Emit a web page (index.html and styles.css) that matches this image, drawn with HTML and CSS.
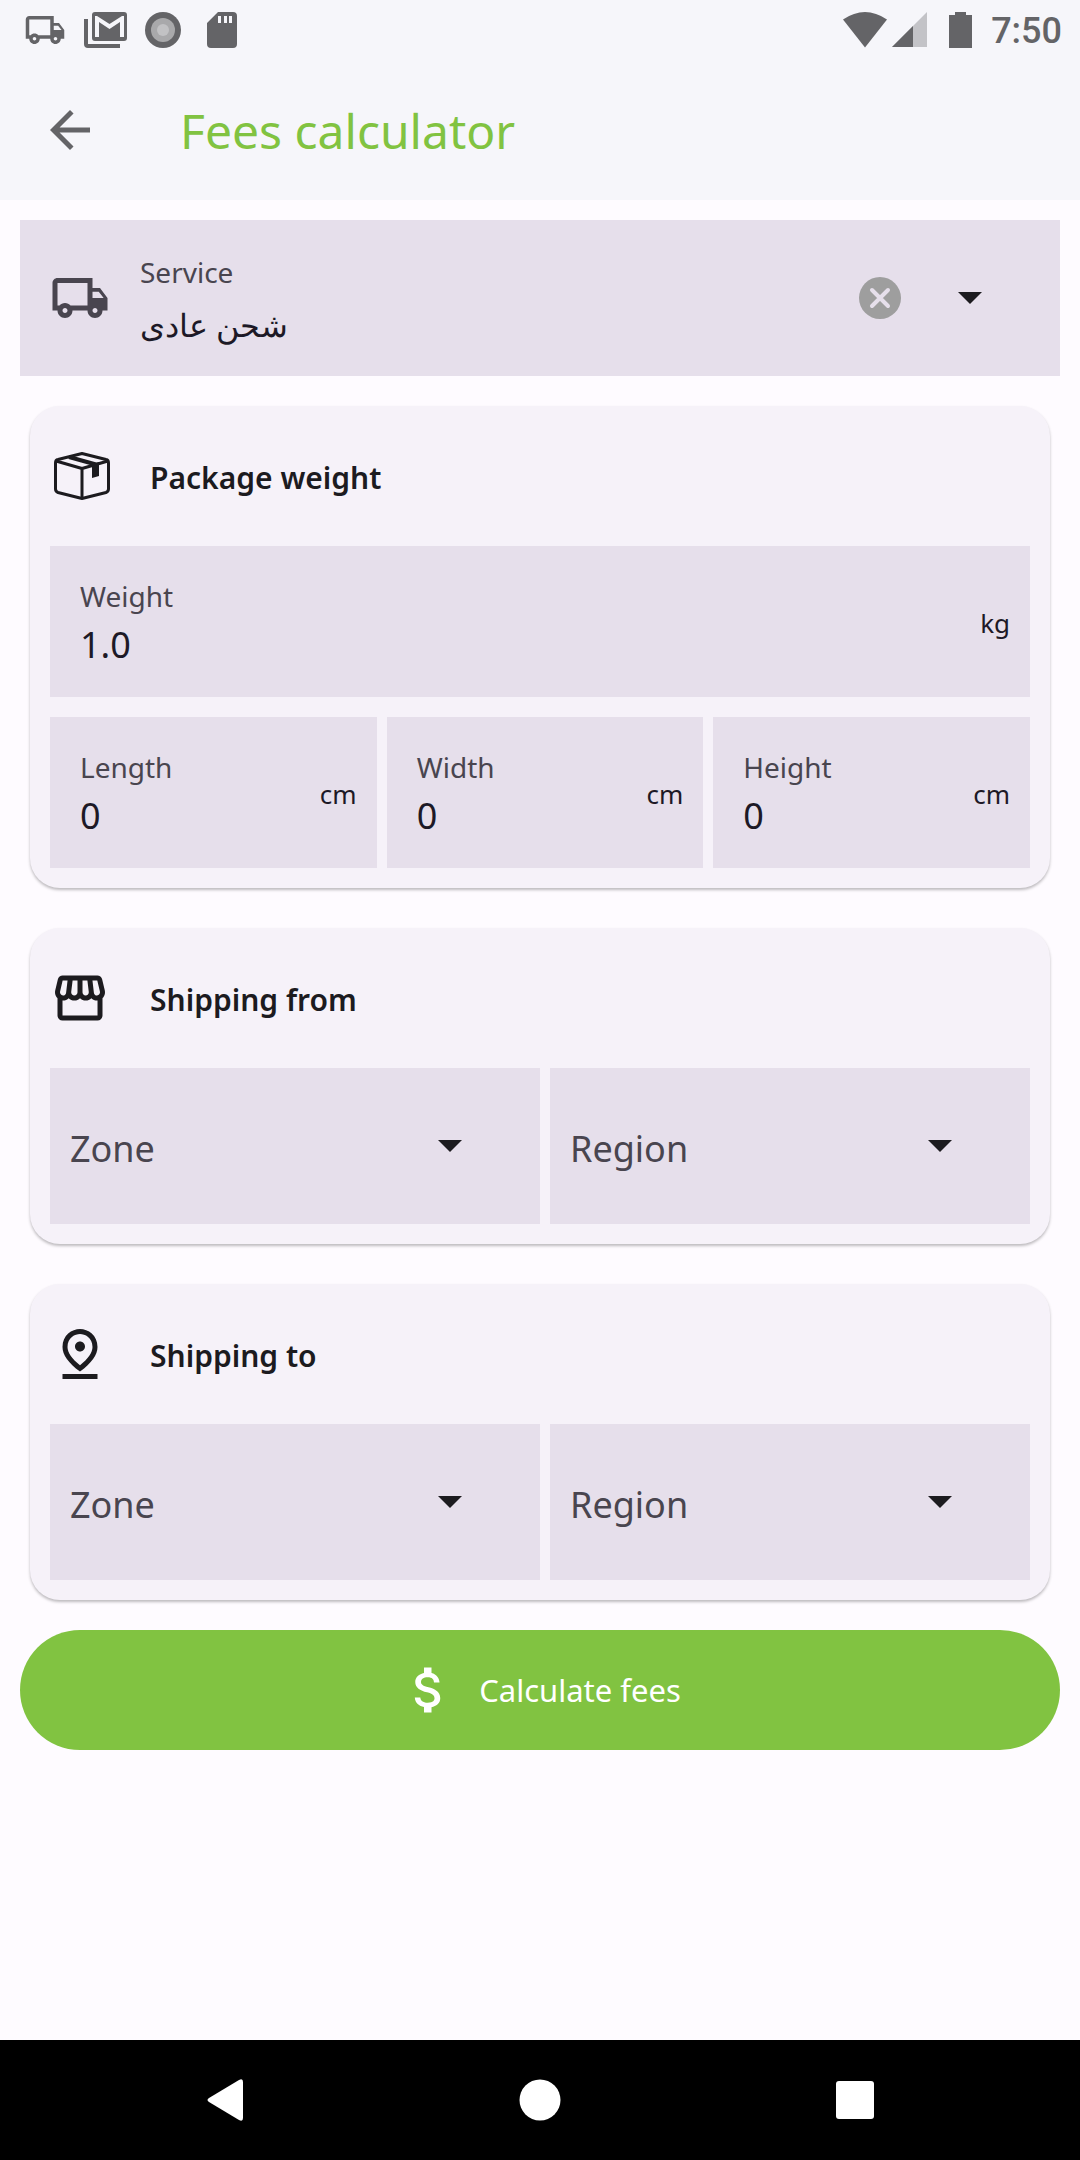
FILE: index.html
```html
<!DOCTYPE html>
<html lang="en">
<head>
<meta charset="utf-8">
<meta name="viewport" content="width=device-width, initial-scale=1">
<title>Fees calculator</title>
<link rel="stylesheet" href="styles.css">
</head>
<body>
<svg class="sprite" aria-hidden="true">
  <symbol id="truck" viewBox="0 0 24 24"><path d="M20 8h-3V4H3c-1.1 0-2 .9-2 2v11h2c0 1.66 1.34 3 3 3s3-1.34 3-3h6c0 1.66 1.34 3 3 3s3-1.34 3-3h2v-5l-3-4zm-.5 1.5l1.96 2.5H17V9.500h2.5zM6 18c-.55 0-1-.45-1-1s.45-1 1-1 1 .45 1 1-.45 1-1 1zm2.220-3c-.55-.61-1.330-1-2.220-1s-1.670.39-2.220 1H3V6h12v9H8.220zM18 18c-.55 0-1-.45-1-1s.45-1 1-1 1 .45 1 1-.45 1-1 1z"/></symbol>
  <symbol id="caret" viewBox="0 0 24 12"><path d="M0 0h24L12 12z"/></symbol>
</svg>

<header class="top">
  <div class="status">
    <div class="status-group notices">
      <svg class="i42" aria-hidden="true"><use href="#truck"/></svg>
      <svg class="mail" viewBox="0 0 43 36" aria-hidden="true"><path fill-rule="evenodd" d="M11 0h29a3 3 0 0 1 3 3v23a3 3 0 0 1-3 3H11a3 3 0 0 1-3-3V3a3 3 0 0 1 3-3zM11 4v21h4V10l10.500 7L36 10v15h4V4h-2l-12.500 8L13 4z"/><path d="M0 7h4v25h32v4H4a4 4 0 0 1-4-4z"/></svg>
      <svg class="i36" viewBox="0 0 36 36" aria-hidden="true"><circle cx="18" cy="18" r="18"/><circle cx="18" cy="18" r="12" fill="#a9a9ab"/><circle cx="18" cy="18" r="6" fill="#c2c2c4"/></svg>
      <svg class="sd" viewBox="0 0 30 36" aria-hidden="true"><path fill-rule="evenodd" d="M11 0h15a4 4 0 0 1 4 4v28a4 4 0 0 1-4 4H4a4 4 0 0 1-4-4V11zM11 4v7h3V4zM17 4v7h3V4zM22 4v7h3V4z"/></svg>
    </div>
    <div class="status-group system">
      <svg class="wifi" viewBox="0 0 44 36" aria-hidden="true"><path d="M0 7.500Q22-7.500 44 7.500L22 35.500z"/></svg>
      <svg class="i36 signal" viewBox="0 0 36 36" aria-hidden="true"><path d="M35 0v35H0z" opacity=".35"/><path d="M21 14v21H0z"/></svg>
      <svg class="battery" viewBox="0 0 23 36" aria-hidden="true"><path d="M6 0h11v3h6v33H0V3h6z"/></svg>
      <time class="clock">7:50</time>
    </div>
  </div>
  <div class="appbar">
    <button class="icon-btn" type="button" aria-label="Back"><svg class="i60" viewBox="0 0 24 24" aria-hidden="true"><path d="M20 11H7.830l5.590-5.590L12 4l-8 8 8 8 1.410-1.410L7.830 13H20v-2z"/></svg></button>
    <h1 class="title">Fees calculator</h1>
  </div>
</header>

<main class="page">
  <div class="field tall service">
    <svg class="i60" aria-hidden="true"><use href="#truck"/></svg>
    <div class="stack">
      <label for="service">Service</label>
      <select id="service" class="value arabic"><option>شحن عادى</option></select>
    </div>
    <button class="icon-btn clear" type="button" aria-label="Clear service"><svg class="i42" viewBox="0 0 42 42" aria-hidden="true"><circle cx="21" cy="21" r="21"/><path d="M13 13l16 16M29 13L13 29" fill="none" stroke="#e6dfeb" stroke-width="4" stroke-linecap="round"/></svg></button>
    <svg class="caret" aria-hidden="true"><use href="#caret"/></svg>
  </div>

  <section class="card">
    <div class="card-head">
      <svg class="i60" viewBox="0 0 60 60" aria-hidden="true"><g fill="none" stroke="#1c1b1f" stroke-width="3" stroke-linejoin="round"><path d="M32 7.500L56 13.500Q58.500 14 58.500 17V43Q58.500 45.500 56 46.500L32 52.500L8 46.500Q5.500 45.500 5.500 43V17Q5.500 14 8 13.500z"/><path d="M6 15L32 22.500L58 15M32 22.500V52"/><path d="M19 11L46 18.500" stroke-width="4"/></g><path d="M42 18l7-2v14l-7 2z"/></svg>
      <h2>Package weight</h2>
    </div>
    <div class="field">
      <div class="stack"><label for="weight">Weight</label><input id="weight" class="value" value="1.0" inputmode="decimal"></div>
      <span class="unit">kg</span>
    </div>
    <div class="row thirds">
      <div class="field">
        <div class="stack"><label for="length">Length</label><input id="length" class="value" value="0" inputmode="decimal"></div>
        <span class="unit">cm</span>
      </div>
      <div class="field">
        <div class="stack"><label for="width">Width</label><input id="width" class="value" value="0" inputmode="decimal"></div>
        <span class="unit">cm</span>
      </div>
      <div class="field">
        <div class="stack"><label for="height">Height</label><input id="height" class="value" value="0" inputmode="decimal"></div>
        <span class="unit">cm</span>
      </div>
    </div>
  </section>

  <section class="card">
    <div class="card-head">
      <svg class="i60" viewBox="0 0 24 24" aria-hidden="true"><path d="M21.900 8.890l-1.050-4.370c-.22-.9-1-1.520-1.910-1.520H5.050c-.9 0-1.690.63-1.900 1.520L2.100 8.890c-.24 1.020-.02 2.060.62 2.880.08.11.19.19.28.29V19c0 1.100.9 2 2 2h14c1.100 0 2-.9 2-2v-6.940c.09-.09.2-.18.28-.28.64-.82.87-1.870.62-2.890zm-2.990-3.900l1.050 4.370c.1.42.01.84-.25 1.170-.14.18-.44.47-.94.47-.61 0-1.140-.49-1.210-1.140L16.980 5l1.930-.01zM13 5h1.960l.54 4.520c.05.39-.07.78-.33 1.070-.22.26-.54.41-.95.41-.67 0-1.220-.59-1.220-1.310V5zM8.490 9.520L9.040 5H11v4.690c0 .72-.55 1.310-1.290 1.310-.34 0-.65-.15-.89-.41-.25-.29-.37-.68-.33-1.070zm-4.450-.16L5.050 5h1.970l-.58 4.860c-.08.65-.6 1.140-1.210 1.140-.49 0-.8-.29-.93-.47-.27-.32-.36-.75-.26-1.170zM5 19v-6.030c.08.01.15.03.23.03.87 0 1.660-.36 2.240-.95.6.6 1.400.95 2.310.95.87 0 1.650-.36 2.230-.93.59.57 1.390.93 2.290.93.84 0 1.640-.35 2.240-.95.58.59 1.370.95 2.240.95.08 0 .15-.02.23-.03V19H5z"/></svg>
      <h2>Shipping from</h2>
    </div>
    <div class="row halves">
      <div class="field tall"><select class="pick" aria-label="Zone to ship from"><option>Zone</option></select><svg class="caret" aria-hidden="true"><use href="#caret"/></svg></div>
      <div class="field tall"><select class="pick" aria-label="Region to ship from"><option>Region</option></select><svg class="caret" aria-hidden="true"><use href="#caret"/></svg></div>
    </div>
  </section>

  <section class="card">
    <div class="card-head">
      <svg class="i60" viewBox="0 0 24 24" aria-hidden="true"><path d="M12 4c1.930 0 5 1.400 5 5.150 0 2.160-1.720 4.670-5 7.320-3.280-2.650-5-5.170-5-7.320C7 5.400 10.070 4 12 4m0-2C8.730 2 5 4.460 5 9.150c0 3.120 2.330 6.410 7 9.850 4.670-3.440 7-6.730 7-9.850C19 4.460 15.270 2 12 2zm0 5c-1.100 0-2 .9-2 2s.9 2 2 2 2-.9 2-2-.9-2-2-2zM5 20h14v2H5v-2z"/></svg>
      <h2>Shipping to</h2>
    </div>
    <div class="row halves">
      <div class="field tall"><select class="pick" aria-label="Zone to ship to"><option>Zone</option></select><svg class="caret" aria-hidden="true"><use href="#caret"/></svg></div>
      <div class="field tall"><select class="pick" aria-label="Region to ship to"><option>Region</option></select><svg class="caret" aria-hidden="true"><use href="#caret"/></svg></div>
    </div>
  </section>

  <button class="submit" type="button">
    <svg class="i60" viewBox="0 0 24 24" aria-hidden="true"><path d="M11.800 10.900c-2.270-.59-3-1.200-3-2.150 0-1.090 1.010-1.850 2.700-1.850 1.780 0 2.440.85 2.500 2.100h2.210c-.07-1.720-1.120-3.300-3.210-3.810V3h-3v2.160c-1.940.42-3.500 1.680-3.500 3.610 0 2.310 1.910 3.460 4.700 4.130 2.500.6 3 1.480 3 2.410 0 .69-.49 1.790-2.700 1.790-2.060 0-2.870-.92-2.980-2.100h-2.200c.12 2.190 1.760 3.420 3.680 3.830V21h3v-2.150c1.950-.37 3.500-1.500 3.500-3.550 0-2.840-2.430-3.810-4.700-4.400z"/></svg>
    Calculate fees
  </button>
</main>

<nav class="nav" aria-label="System">
  <button class="icon-btn" type="button" aria-label="Back"><svg class="i42" viewBox="0 0 42 42" aria-hidden="true"><path d="M35 1q4-2 4 2v36q0 4-4 2L5 23q-3-2 0-4z"/></svg></button>
  <button class="icon-btn" type="button" aria-label="Home"><svg class="i42" viewBox="0 0 42 42" aria-hidden="true"><circle cx="21" cy="21" r="20.500"/></svg></button>
  <button class="icon-btn" type="button" aria-label="Recent apps"><svg class="i42" viewBox="0 0 42 42" aria-hidden="true"><rect x="2" y="2" width="38" height="38" rx="3"/></svg></button>
</nav>
</body>
</html>
```

FILE: styles.css
```css
* { box-sizing: border-box; }

body {
  margin: 0;
  min-height: 100vh;
  display: flex;
  flex-direction: column;
  background: #fefbff;
  color: #1c1b1f;
  font-family: "Noto Sans", "Open Sans", sans-serif;
}

svg { display: block; flex: none; fill: currentColor; }
.sprite { position: absolute; width: 0; height: 0; }
.i36 { width: 36px; height: 36px; }
.i42 { width: 42px; height: 42px; }
.i60 { width: 60px; height: 60px; }
.mail { width: 43px; height: 36px; }
.sd { width: 30px; height: 36px; }
.wifi { width: 44px; height: 36px; }
.battery { width: 23px; height: 36px; }
.caret { width: 24px; height: 12px; color: #1c1b1f; }

button, select, input {
  margin: 0;
  padding: 0;
  border: 0;
  border-radius: 0;
  background: none;
  color: inherit;
  font: inherit;
  appearance: none;
}
.icon-btn { display: flex; }

.top { background: #f6f6fa; color: #646467; }
.status {
  height: 60px;
  padding: 0 18px 0 24px;
  display: flex;
  align-items: center;
  justify-content: space-between;
}
.status-group { display: flex; align-items: center; }
.notices { gap: 18px; }
.notices .sd { margin-left: 8px; }
.signal { margin: 0 21px 0 5px; }
.clock {
  margin-left: 19px;
  padding-top: 2px;
  font: 500 36px/40px Roboto, sans-serif;
}
.appbar {
  height: 140px;
  padding: 0 40px;
  display: flex;
  align-items: center;
  gap: 80px;
}
.title {
  margin: 0;
  padding-top: 2px;
  color: #81c341;
  font-size: 48px;
  font-weight: 400;
  line-height: 64px;
}

.page {
  padding: 20px 20px 30px;
  display: flex;
  flex-direction: column;
}

.field {
  min-height: 151px;
  padding: 0 20px 0 30px;
  display: flex;
  align-items: center;
  background: #e6dfeb;
}
.field.tall { min-height: 156px; padding: 0 78px 0 20px; }
.field.service { padding-left: 30px; color: #49454f; }
.clear { margin-right: 57px; color: #9e9e9e; }
.service .stack { margin-left: 30px; }
.stack {
  flex: 1;
  min-width: 0;
  padding-top: 3px;
  display: flex;
  flex-direction: column;
  gap: 5px;
}
label { color: #49454f; font-size: 28px; line-height: 38px; }
.value {
  width: 100%;
  height: 50px;
  color: #1d1926;
  font-size: 36px;
  line-height: 50px;
}
.arabic { padding-top: 4px; font-size: 32px; }
.unit { padding-top: 2px; color: #1d1926; font-size: 26px; line-height: 36px; }
.pick {
  flex: 1;
  min-width: 0;
  height: 156px;
  padding-top: 4px;
  color: #49454f;
  font-size: 36px;
}

.card {
  margin: 30px 10px 10px;
  padding: 0 20px 20px;
  border-radius: 30px;
  background: #f6f2f9;
  box-shadow: 0 2px 3px rgba(0, 0, 0, .26);
}
.card-head {
  height: 140px;
  display: flex;
  align-items: center;
  gap: 40px;
}
h2 { margin: 0; padding-top: 4px; font-size: 30px; font-weight: 600; line-height: 40px; }
.row { display: grid; }
.thirds { margin-top: 20px; grid-template-columns: repeat(3, 1fr); }
.halves { grid-template-columns: repeat(2, 1fr); }
.row .field + .field { margin-left: 10px; }

.submit {
  margin-top: 20px;
  min-height: 120px;
  display: flex;
  align-items: center;
  justify-content: center;
  gap: 20px;
  border-radius: 60px;
  background: #81c341;
  color: #fff;
  font-size: 31px;
  line-height: 44px;
}

.nav {
  margin-top: auto;
  min-height: 120px;
  padding: 0 68px;
  display: grid;
  grid-template-columns: repeat(3, 1fr);
  align-items: center;
  justify-items: center;
  background: #000;
  color: #fff;
}
```
